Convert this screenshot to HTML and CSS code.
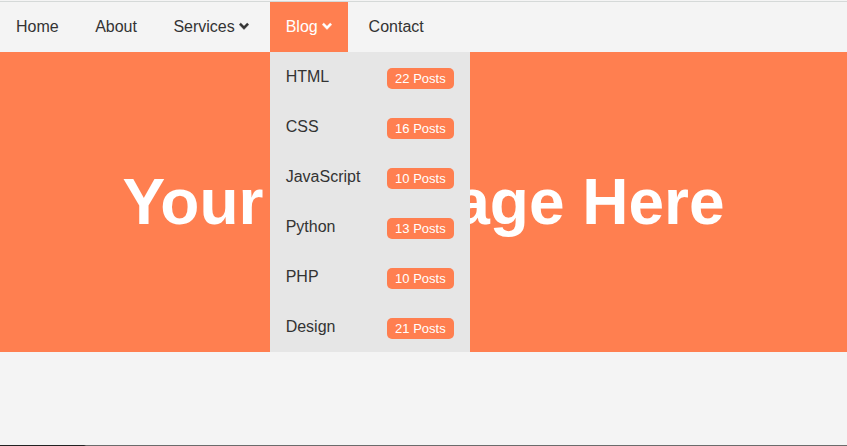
FILE: index.html
```html
<!DOCTYPE html>
<html lang="en">
<head>
<meta charset="utf-8">
<meta name="viewport" content="width=device-width, initial-scale=1">
<title>Dropdown Menu</title>
<link rel="stylesheet" href="styles.css">
</head>
<body>
<svg class="sprite" aria-hidden="true">
  <symbol id="chevron" viewBox="0 0 10 12"><path d="M0.200 4.600 1.800 3 5 6.200 8.200 3 9.800 4.600 5 9.600z" fill="currentColor" stroke="currentColor" stroke-width="0.400" stroke-linejoin="round"/></symbol>
</svg>
<nav class="nav">
  <ul class="nav-list">
    <li class="nav-item"><a class="nav-link" href="#">Home</a></li>
    <li class="nav-item"><a class="nav-link" href="#">About</a></li>
    <li class="nav-item"><a class="nav-link" href="#">Services <svg class="chevron" aria-hidden="true"><use href="#chevron"/></svg></a></li>
    <li class="nav-item">
      <a class="nav-link active" href="#">Blog <svg class="chevron" aria-hidden="true"><use href="#chevron"/></svg></a>
      <ul class="menu">
        <li><a class="menu-link" href="#">HTML <span class="badge">22 Posts</span></a></li>
        <li><a class="menu-link" href="#">CSS <span class="badge">16 Posts</span></a></li>
        <li><a class="menu-link" href="#">JavaScript <span class="badge">10 Posts</span></a></li>
        <li><a class="menu-link" href="#">Python <span class="badge">13 Posts</span></a></li>
        <li><a class="menu-link" href="#">PHP <span class="badge">10 Posts</span></a></li>
        <li><a class="menu-link" href="#">Design <span class="badge">21 Posts</span></a></li>
      </ul>
    </li>
    <li class="nav-item"><a class="nav-link" href="#">Contact</a></li>
  </ul>
</nav>
<header class="hero"><h1 class="hero-title">Your Webpage Here</h1></header>
<footer class="footer"></footer>
</body>
</html>
```
FILE: styles.css
```css
* {
  box-sizing: border-box;
  margin: 0;
  padding: 0;
}

body {
  display: flex;
  flex-direction: column;
  min-height: 100vh;
  padding-top: 1px;
  background: #f4f4f4;
  color: #333;
  font-family: "Liberation Sans", Arial, sans-serif;
  font-size: 16px;
}

ul {
  list-style: none;
}

a {
  color: inherit;
  text-decoration: none;
}

.sprite {
  display: none;
}

.nav {
  border-top: 1px solid #d5d9d8;
}

.nav-list {
  height: 50px;
  white-space: nowrap;
}

.nav-item {
  display: inline-block;
  position: relative;
  vertical-align: top;
}

.nav-link {
  display: block;
  padding: 0 16px;
  line-height: 50px;
}

.active {
  background: #ff7f50;
  color: #fff;
}

.chevron {
  display: inline-block;
  width: 10px;
  height: 12px;
  overflow: visible;
}

.menu {
  position: absolute;
  top: 100%;
  left: 0;
  z-index: 1;
  width: 200px;
  background: #e6e6e6;
}

.menu-link {
  display: flex;
  justify-content: space-between;
  align-items: flex-start;
  height: 50px;
  padding: 16px;
  line-height: 18px;
}

.badge {
  padding: 3px 8px;
  border-radius: 5px;
  background: #ff7f50;
  color: #fff;
  font-size: 13px;
  line-height: 15px;
}

.hero {
  display: flex;
  justify-content: center;
  align-items: center;
  min-height: 300px;
  background: #ff7f50;
}

.hero-title {
  color: #fff;
  font-size: 64px;
  line-height: 74px;
}

.footer {
  height: 1px;
  margin-top: auto;
  background: linear-gradient(to right, #222 84px, #6b6b6b 86px);
}
```
